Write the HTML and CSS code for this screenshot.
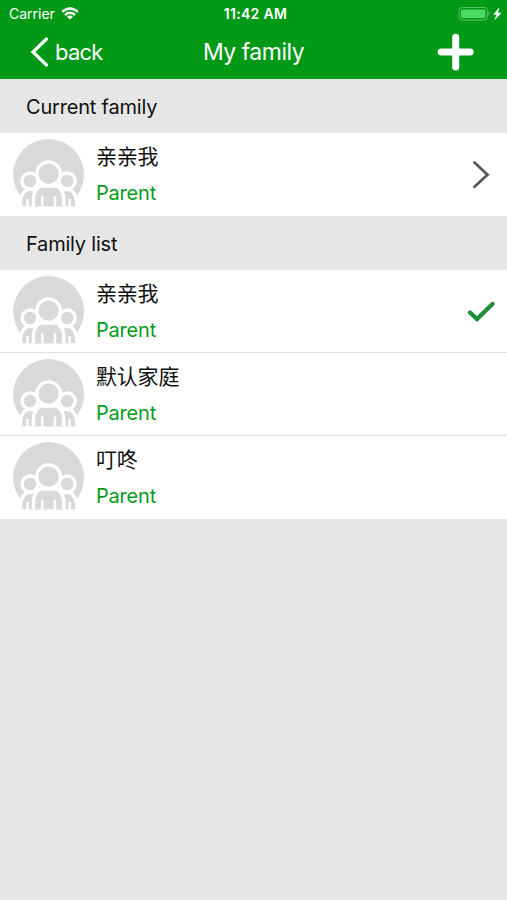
FILE: index.html
```html
<!DOCTYPE html>
<html lang="en">
<head>
    <meta charset="UTF-8">
    <meta name="viewport" content="width=device-width, initial-scale=1.0">
    <title>My family</title>
    <link rel="stylesheet" href="styles.css">
</head>
<body>
    <svg width="0" height="0" class="symbols">
        <symbol id="family" viewBox="0 0 72 72">
            <clipPath id="cut"><path d="M0 0H72V56L62 67.300H10L0 56Z"/></clipPath>
            <g clip-path="url(#cut)">
                <circle cx="35.6" cy="35.500" r="35.500" fill="#d9d9d9"/>
                <path d="M5 59L12 51L20 72H8ZM66.200 59L59.200 51L51 72H63Z" fill="#fff"/>
                <g fill="#d9d9d9" stroke="#fff" stroke-width="3.400">
                    <path d="M7.500 72V62Q8.500 54 14 50.500H26V72Z"/>
                    <path d="M63.700 72V62Q62.700 54 57.200 50.500H45V72Z"/>
                    <circle cx="17" cy="42" r="8"/>
                    <circle cx="54.200" cy="42" r="8"/>
                    <path d="M20.500 72V60Q20.500 51.500 27 47H44.200Q50.700 51.500 50.700 60V72Z"/>
                    <circle cx="35.600" cy="34.700" r="11.800"/>
                </g>
                <path d="M29.300 57.500V68M41.900 57.500V68M14.500 60V68M56.700 60V68" stroke="#fff" stroke-width="2.500"/>
            </g>
        </symbol>
    </svg>

    <div class="header">
        <div class="status">
            <div class="status__left">
                <span>Carrier</span>
                <svg width="18" height="13" viewBox="0 0 18 13" fill="none" stroke="#fff" stroke-width="2.400">
                    <path d="M1.200 4.800Q9-2 16.800 4.800M4 8Q9 3.700 14 8"/>
                    <path d="M9 12.500L6 9.700Q9 7.500 12 9.700Z" fill="#fff" stroke="none"/>
                </svg>
            </div>
            <span class="status__time">11:42 AM</span>
            <div class="status__right">
                <svg width="44" height="16" viewBox="0 0 44 16">
                    <rect x="1" y="1.500" width="28.500" height="12.500" rx="3.200" fill="none" stroke="#5fbd69"/>
                    <rect x="3" y="3.500" width="24.500" height="8.500" rx="1.500" fill="#4cd964"/>
                    <path d="M30.500 5.500Q32.500 7.700 30.500 10Z" fill="#7cca84"/>
                    <path d="M41 2L35.500 8.500H38.800L37 13.500L43 7H39.700Z" fill="#fff" stroke="#fff" stroke-width=".5"/>
                </svg>
            </div>
        </div>
        <div class="nav">
            <div class="nav__back">
                <svg width="18" height="30" viewBox="0 0 18 30" fill="none" stroke="#fff" stroke-width="3.200" stroke-linecap="round">
                    <path d="M16.500 2L3 15L16.500 28"/>
                </svg>
                <span>back</span>
            </div>
            <span class="nav__title">My family</span>
            <div class="nav__add">
                <svg width="38" height="38" viewBox="0 0 38 38" stroke="#fff" stroke-width="7" stroke-linecap="round">
                    <path d="M18.700 4.200V34M4.200 19H33.200"/>
                </svg>
            </div>
        </div>
    </div>

    <div class="caption"><span>Current family</span></div>
    <div class="row">
        <svg class="avatar"><use href="#family"/></svg>
        <div class="info">
            <div class="name">亲亲我</div>
            <div class="role">Parent</div>
        </div>
        <svg class="arrow" width="18" height="30" viewBox="0 0 18 30" fill="none" stroke="#555" stroke-width="2.700" stroke-linecap="round">
            <path d="M2.500 2.500L15.500 14.700L2.500 26.800"/>
        </svg>
    </div>

    <div class="caption"><span>Family list</span></div>
    <div class="list">
        <div class="row">
            <svg class="avatar"><use href="#family"/></svg>
            <div class="info">
                <div class="name">亲亲我</div>
                <div class="role">Parent</div>
            </div>
            <svg class="check" width="28" height="22" viewBox="0 0 28 22" fill="none" stroke="#1e8e3a" stroke-width="4.300" stroke-linecap="round">
                <path d="M3 11.500L10 18L25.500 3"/>
            </svg>
        </div>
        <div class="row">
            <svg class="avatar"><use href="#family"/></svg>
            <div class="info">
                <div class="name">默认家庭</div>
                <div class="role">Parent</div>
            </div>
        </div>
        <div class="row">
            <svg class="avatar"><use href="#family"/></svg>
            <div class="info">
                <div class="name">叮咚</div>
                <div class="role">Parent</div>
            </div>
        </div>
    </div>
</body>
</html>
```
FILE: styles.css
```css
* {
    box-sizing: border-box;
    margin: 0px;
    padding: 0px;
}
body {
    background-color: #e6e6e6;
    font-family: Inter, "Noto Sans CJK SC", sans-serif;
    font-size: 20px;
    letter-spacing: -0.2px;
    color: #111;
}
.symbols {
    display: block;
}
.header {
    height: 79px;
    background-color: #029916;
    color: #fff;
}
.status {
    height: 27px;
    padding: 0px 5px 0px 9px;
    display: grid;
    grid-template-columns: 1fr auto 1fr;
    align-items: center;
    font-size: 14px;
    letter-spacing: 0px;
}
.status__left {
    display: flex;
    align-items: center;
    gap: 6px;
}
.status__time {
    font-size: 14px;
    font-weight: 600;
    letter-spacing: 0.3px;
}
.status__right {
    display: flex;
    justify-content: flex-end;
}
.nav {
    height: 50px;
    padding: 0px 32px 0px 30px;
    display: grid;
    grid-template-columns: 1fr auto 1fr;
    align-items: center;
    font-size: 22px;
    letter-spacing: -0.8px;
}
.nav__back {
    display: flex;
    align-items: center;
    gap: 7px;
}
.nav__title {
    margin-left: 2px;
    font-size: 23px;
    letter-spacing: -0.5px;
}
.nav__add {
    display: flex;
    justify-content: flex-end;
}
.caption {
    height: 54px;
    padding: 1px 0px 0px 26px;
    display: flex;
    align-items: center;
}
.row {
    height: 83px;
    padding: 0px 12px 0px 13px;
    display: flex;
    align-items: center;
    background-color: #fff;
}
.list .row:not(:last-child) {
    padding-top: 1px;
    border-bottom: 1px solid #dedede;
}
.avatar {
    width: 72px;
    height: 72px;
}
.info {
    flex: 1;
    margin-left: 11px;
}
.name {
    height: 37px;
    line-height: 33px;
    font-size: 21px;
}
.role {
    line-height: 32px;
    color: #069c1b;
}
.arrow {
    margin-right: 5px;
}
```
